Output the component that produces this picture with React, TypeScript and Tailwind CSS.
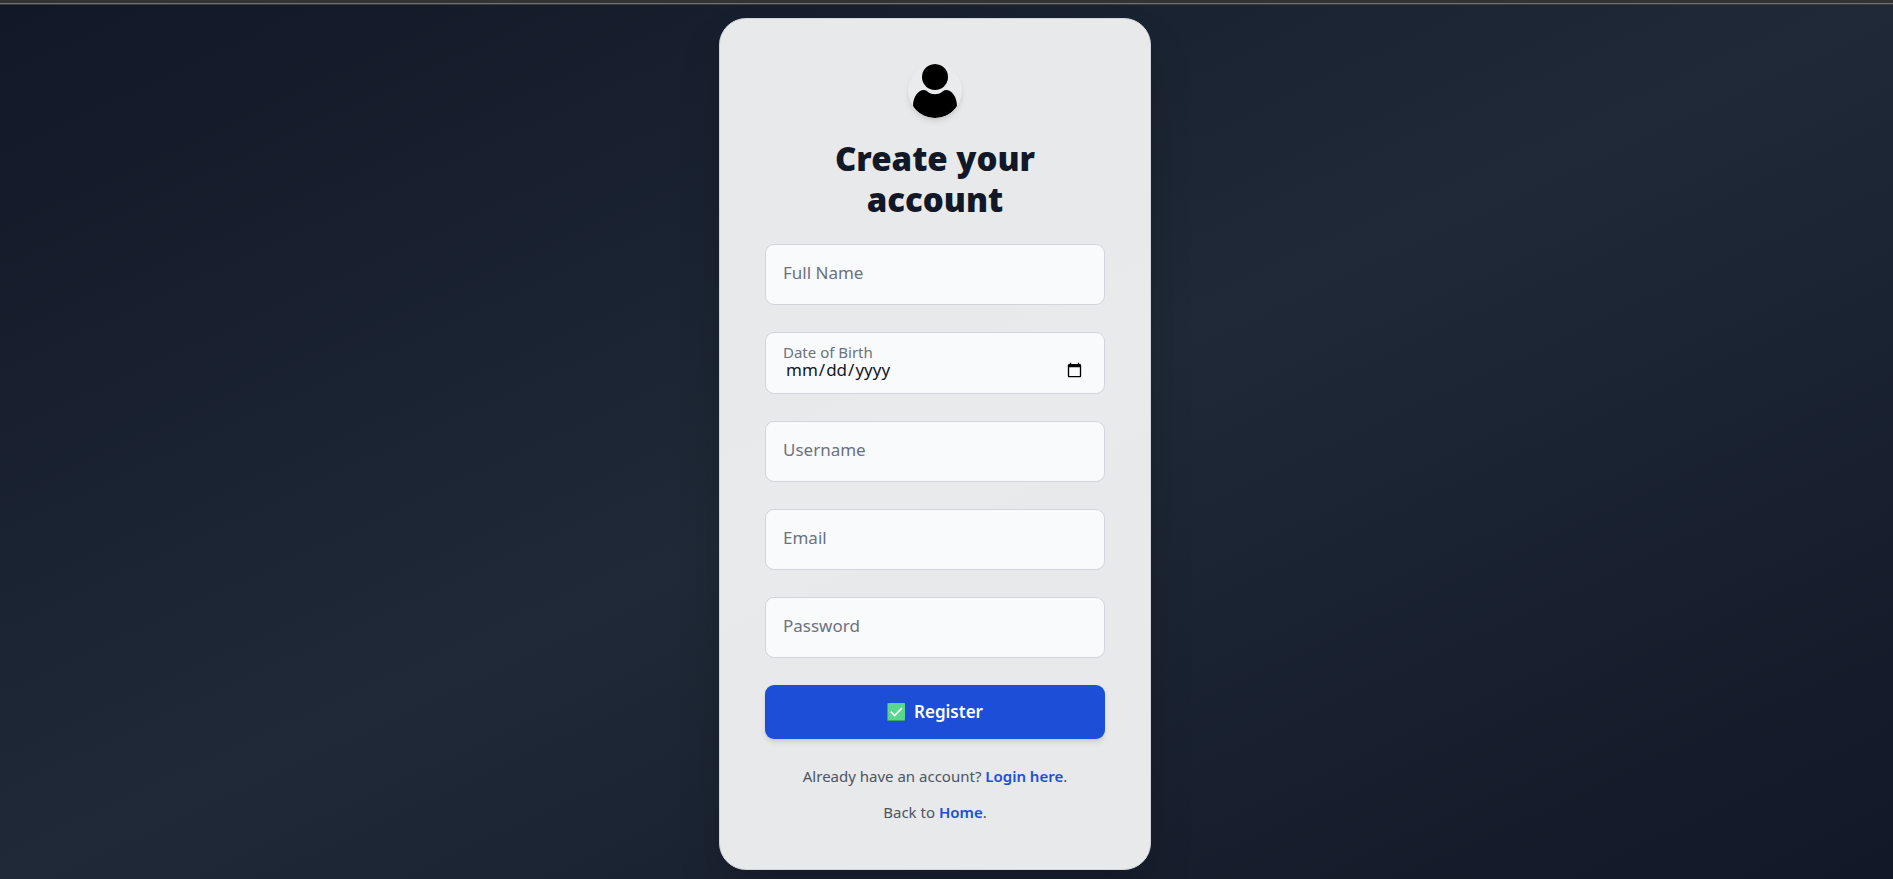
import { useId, useState } from "react";

type FieldProps = { label: string; type: string; autoComplete: string };

function Field({ label, type, autoComplete }: FieldProps) {
  const id = useId();
  return (
    <div>
      <input
        id={id}
        type={type}
        placeholder={label}
        aria-label={label}
        autoComplete={autoComplete}
        className="block h-[61px] w-full rounded-[9px] border border-[#d1d5db] bg-[#f9fafb] px-[17px] pb-1 text-[17px] text-[#111827] placeholder:text-[#6b7280] focus:outline-2 focus:outline-[#1d4ed8]"
      />
    </div>
  );
}

function DateField() {
  const id = useId();
  const [value, setValue] = useState("");
  return (
    <div className="flex h-[62px] flex-col rounded-[9px] border border-[#d1d5db] bg-[#f9fafb] px-[17px] pt-[11px]">
      <label htmlFor={id} className="text-[15px] leading-4 text-[#6b7280]">Date of Birth</label>
      <input
        id={id}
        type="date"
        value={value}
        onChange={(e) => setValue(e.target.value)}
        className="h-5 w-full bg-transparent px-0.5 text-[17px] leading-5 text-[#111827] outline-none"
      />
    </div>
  );
}

function UserIcon() {
  return (
    <svg viewBox="0 0 54 54" className="size-[54px] rounded-full bg-white/10 shadow-md" aria-hidden="true">
      <circle cx="27" cy="13" r="13" />
      <path d="M16 26C10 26 5 33 5 42C9 49 17 54 27 54S45 49 49 42C49 33 44 26 38 26C36 26 35 27 34 28C30 31 24 31 20 28C19 27 18 26 16 26Z" />
    </svg>
  );
}

function CheckIcon() {
  return (
    <svg viewBox="0 0 18 18" className="size-[18px]" aria-hidden="true">
      <rect width="18" height="18" rx="1" fill="#3f9f6c" />
      <rect x="1" width="17" height="17" rx="1" fill="#5bd68f" />
      <path d="M3.8 8.6L7.6 12.6L15 5" fill="none" stroke="#fff" strokeWidth="1.7" />
    </svg>
  );
}

export default function App() {
  return (
    <div className="flex min-h-screen flex-col bg-[linear-gradient(to_bottom_right,#111827,#1f2937,#111827)] font-['Noto_Sans',sans-serif]">
      <div className="h-[5px] border-b border-[#3a3a3a] bg-[#333333] pt-[3px]">
        <div className="h-px bg-[#707070]" />
      </div>
      <main className="flex flex-1 items-start justify-center pt-[13px] pr-[23px] pb-[8px]">
        <section className="w-full max-w-[432px] rounded-[27px] border border-[#d1d5db] bg-white/90 px-[45px] pt-[45px] pb-[45px] shadow-2xl">
          <div className="flex justify-center">
            <UserIcon />
          </div>
          <h1 className="mt-5 px-8 text-center text-[33px] leading-[41px] font-black text-[#111827]">
            Create your account
          </h1>
          <form className="mt-6 flex flex-col gap-[27px]" onSubmit={(e) => e.preventDefault()}>
            <Field label="Full Name" type="text" autoComplete="name" />
            <DateField />
            <Field label="Username" type="text" autoComplete="username" />
            <Field label="Email" type="email" autoComplete="email" />
            <Field label="Password" type="password" autoComplete="new-password" />
            <button
              type="submit"
              className="flex h-[54px] items-center justify-center gap-[9px] rounded-[9px] bg-[#1d4ed8] text-[17px] font-semibold text-white shadow-md"
            >
              <CheckIcon />
              Register
            </button>
          </form>
          <p className="mt-[25px] text-center text-[15px] leading-6 text-[#4b5563]">
            Already have an account? <a href="#login" className="font-semibold text-[#1d4ed8]">Login here</a>.
          </p>
          <p className="mt-3 text-center text-[15px] leading-6 text-[#4b5563]">
            Back to <a href="#home" className="font-semibold text-[#1d4ed8]">Home</a>.
          </p>
        </section>
      </main>
    </div>
  );
}
